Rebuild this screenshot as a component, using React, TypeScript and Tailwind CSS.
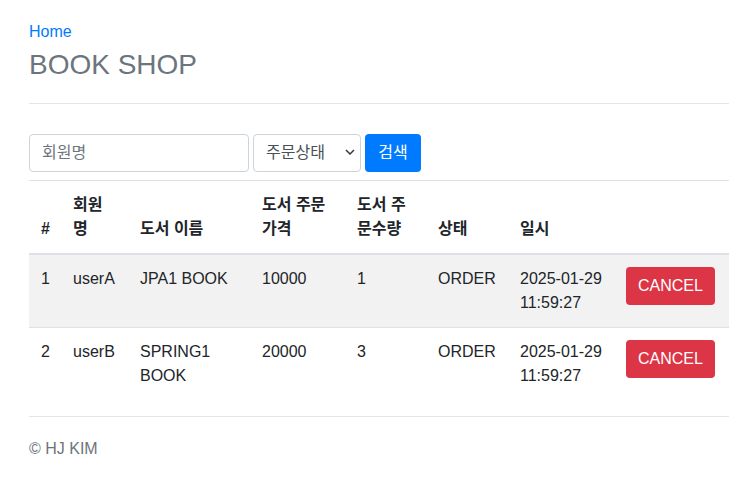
const orders = [
  { id: 1, member: 'userA', book: 'JPA1 BOOK', price: 10000, count: 1, status: 'ORDER', date: '2025-01-29', time: '11:59:27' },
  { id: 2, member: 'userB', book: 'SPRING1 BOOK', price: 20000, count: 3, status: 'ORDER', date: '2025-01-29', time: '11:59:27' },
]

export default function App() {
  return (
    <div
      className="min-h-screen bg-white text-[16px] leading-6 text-[#212529]"
      style={{ fontFamily: '"Liberation Sans", "Noto Sans CJK KR", sans-serif' }}
    >
      <div className="w-[700px] ml-[29px] pt-[20px]">
        <div>
          <a href="#" className="text-[#007bff]">Home</a>
          <h3 className="mt-[4px] mb-[21px] text-[28px] leading-[33.6px] text-[#6c757d]">BOOK SHOP</h3>
        </div>
        <hr className="border-0 border-t border-[#e5e5e5]" />

        <form className="mt-[30px] flex gap-[4px]" onSubmit={e => e.preventDefault()}>
          <input
            placeholder="회원명"
            className="w-[220px] h-[38px] px-3 rounded border border-[#ced4da] placeholder-[#6c757d] outline-none"
          />
          <div className="relative">
            <select className="appearance-none w-[108px] h-[38px] pl-3 pr-6 rounded border border-[#ced4da] bg-white text-[#495057] outline-none">
              <option>주문상태</option>
              <option>ORDER</option>
              <option>CANCEL</option>
            </select>
            {/* select arrow */}
            <svg width="10" height="6" viewBox="0 0 10 6" className="absolute right-[6px] top-[15px] pointer-events-none">
              <path d="M1 1l4 4 4-4" fill="none" stroke="#343a40" strokeWidth="1.5" />
            </svg>
          </div>
          <button className="w-[56px] h-[38px] rounded bg-[#007bff] text-white">검색</button>
        </form>

        <table className="mt-[8px] mb-[16px] w-[700px] table-fixed border-collapse">
          <colgroup>
            <col className="w-[32px]" />
            <col className="w-[67px]" />
            <col className="w-[122px]" />
            <col className="w-[95px]" />
            <col className="w-[81px]" />
            <col className="w-[82px]" />
            <col className="w-[106px]" />
            <col className="w-[115px]" />
          </colgroup>
          <thead>
            <tr className="border-t border-[#dee2e6] border-b-2">
              {['#', '회원명', '도서 이름', '도서 주문가격', '도서 주문수량', '상태', '일시', ''].map((h, i) => (
                <th key={i} className="p-3 align-bottom text-left font-bold break-all">
                  {h === '회원명' ? <>회원<br />명</> : h === '도서 주문가격' ? <>도서 주문<br />가격</> : h === '도서 주문수량' ? <>도서 주<br />문수량</> : h}
                </th>
              ))}
            </tr>
          </thead>
          <tbody>
            {orders.map((o, i) => (
              <tr key={o.id} className={`border-t border-[#dee2e6] ${i % 2 === 0 ? 'bg-[#f2f2f2]' : ''}`}>
                <td className="p-3 align-top">{o.id}</td>
                <td className="p-3 align-top">{o.member}</td>
                <td className="p-3 align-top">{o.book}</td>
                <td className="p-3 align-top">{o.price}</td>
                <td className="p-3 align-top">{o.count}</td>
                <td className="p-3 align-top">{o.status}</td>
                <td className="p-3 align-top">{o.date}<br />{o.time}</td>
                <td className="p-3 align-top">
                  <button className="h-[38px] px-3 rounded bg-[#dc3545] text-white">CANCEL</button>
                </td>
              </tr>
            ))}
          </tbody>
        </table>

        <div className="border-t border-[#e5e5e5] pt-[20px] text-[#6c757d]">© HJ KIM</div>
      </div>
    </div>
  )
}
